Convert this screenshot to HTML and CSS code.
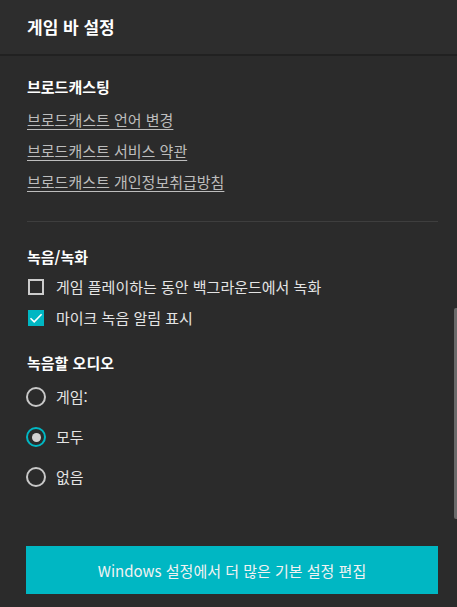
FILE: index.html
```html
<!DOCTYPE html>
<html lang="ko">
<head>
  <meta charset="UTF-8">
  <meta name="viewport" content="width=device-width, initial-scale=1.0">
  <title>게임 바 설정</title>
  <link rel="stylesheet" href="styles.css">
</head>
<body>

  <div class="header">
    <h1>게임 바 설정</h1>
  </div>

  <div class="content">
    <h2 class="section-title first">브로드캐스팅</h2>
    <a class="link first" href="#">브로드캐스트 언어 변경</a>
    <a class="link" href="#">브로드캐스트 서비스 약관</a>
    <a class="link" href="#">브로드캐스트 개인정보취급방침</a>

    <div class="divider"></div>

    <h2 class="section-title">녹음/녹화</h2>
    <label class="check-row">
      <span class="checkbox"></span>
      <span>게임 플레이하는 동안 백그라운드에서 녹화</span>
    </label>
    <label class="check-row">
      <span class="checkbox checked">
        <svg width="16" height="16" viewBox="0 0 16 16"><path d="M2.5 8.2 L6.2 11.8 L13.6 4.3" fill="none" stroke="#fff" stroke-width="1.6"/></svg>
      </span>
      <span>마이크 녹음 알림 표시</span>
    </label>

    <h2 class="section-title">녹음할 오디오</h2>
    <label class="radio-row first">
      <span class="radio"></span>
      <span>게임:</span>
    </label>
    <label class="radio-row">
      <span class="radio selected"><span class="dot"></span></span>
      <span>모두</span>
    </label>
    <label class="radio-row">
      <span class="radio"></span>
      <span>없음</span>
    </label>

    <button class="settings-btn">Windows 설정에서 더 많은 기본 설정 편집</button>
  </div>

  <div class="scroll-thumb"></div>

</body>
</html>
```

FILE: styles.css
```css
body {
  margin: 0;
  background-color: #2b2b2b;
  color: #e6e6e6;
  font-family: "Noto Sans CJK KR", "Noto Sans", sans-serif;
  font-size: 15px;
  position: relative;
  height: 607px;
  overflow: hidden;
}
.header {
  height: 54px;
  padding-left: 27px;
  display: flex;
  align-items: center;
  background-color: #2d2d2d;
  border-bottom: 2px solid #212121;
}
.header h1 {
  margin: 0;
  font-size: 17px;
  line-height: 20px;
  font-weight: 700;
  color: #ffffff;
}
.content {
  padding: 0 19px 0 27px;
}
.section-title {
  margin: 25px 0 0 0;
  font-size: 15px;
  line-height: 20px;
  font-weight: 700;
  color: #ffffff;
}
.section-title.first {
  margin-top: 21px;
}
.link {
  display: block;
  width: max-content;
  margin-top: 11px;
  line-height: 20px;
  color: #bdbdbd;
  text-decoration: underline;
  text-underline-offset: 3px;
}
.link.first {
  margin-top: 13px;
}
.divider {
  height: 1px;
  margin-top: 29px;
  background-color: #3e3e3e;
}
.check-row {
  display: flex;
  align-items: center;
  gap: 12px;
  margin-top: 11px;
  line-height: 20px;
  color: #e4e4e4;
}
.check-row:first-of-type {
  margin-top: 10px;
}
.checkbox {
  width: 16px;
  height: 16px;
  box-sizing: border-box;
  border: 2px solid #cccccc;
  margin-left: 1px;
  display: flex;
}
.checkbox.checked {
  border: none;
  background-color: #00b7c3;
}
.radio-row {
  display: flex;
  align-items: center;
  gap: 10px;
  margin-top: 20px;
  line-height: 20px;
  color: #e4e4e4;
}
.radio-row.first {
  margin-top: 14px;
}
.radio {
  width: 20px;
  height: 20px;
  box-sizing: border-box;
  border: 2px solid #c8c8c8;
  border-radius: 50%;
  margin-left: -1px;
  display: flex;
  align-items: center;
  justify-content: center;
}
.radio.selected {
  border-color: #00b7c3;
}
.radio .dot {
  width: 9px;
  height: 9px;
  border-radius: 50%;
  background-color: #d2d2d2;
}
.settings-btn {
  display: block;
  width: 412px;
  height: 48px;
  margin: 59px 0 0 -1px;
  border: none;
  background-color: #00b7c3;
  color: #f2f2f2;
  font-family: "Noto Sans CJK KR", "Noto Sans", sans-serif;
  font-size: 15px;
  cursor: pointer;
}
.scroll-thumb {
  position: absolute;
  right: 0;
  top: 308px;
  width: 3px;
  height: 211px;
  background-color: #6a6a6a;
  border-radius: 2px 0 0 2px;
}
```
